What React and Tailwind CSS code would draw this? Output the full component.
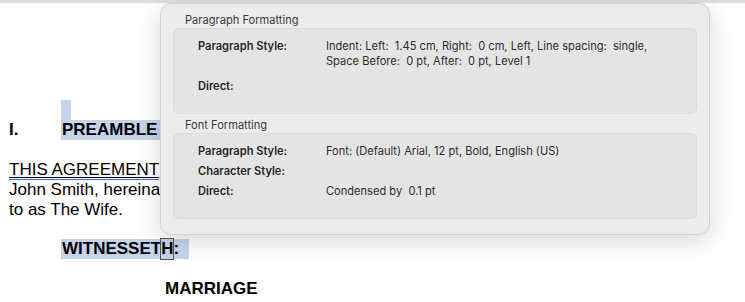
const docFont = { fontFamily: '"Liberation Sans", Arial, sans-serif' }

function InfoRow({ label, children }) {
  return (
    <div className="flex">
      <div className="w-[128px] shrink-0 font-semibold text-[#262626]">{label}</div>
      <div className="text-[#2e2e2e]">{children}</div>
    </div>
  )
}

function FormattingPopup() {
  return (
    <div
      className="absolute left-[160px] top-[3px] h-[232px] w-[550px] rounded-[11px] border border-[#d2d2d2] bg-[#ececec] px-[12px] pt-[9px] text-[11.1px] leading-[15px] shadow-[0_6px_24px_rgba(0,0,0,0.16)]"
      style={{ fontFamily: 'Inter, "Noto Sans", sans-serif' }}
    >
      <div className="pl-[12px] text-[#3a3a3a]">Paragraph Formatting</div>
      <div className="h-[86px] rounded-[6px] border border-[#dcdcdc] bg-[#e4e4e4] px-[24px] pt-[10px]">
        <InfoRow label="Paragraph Style:">
          Indent: Left:&nbsp; 1.45 cm, Right:&nbsp; 0 cm, Left, Line spacing:&nbsp; single,
          <br />
          Space Before:&nbsp; 0 pt, After:&nbsp; 0 pt, Level 1
        </InfoRow>
        <div className="mt-[10px]">
          <InfoRow label="Direct:" />
        </div>
      </div>
      <div className="mt-[4px] pl-[12px] text-[#3a3a3a]">Font Formatting</div>
      <div className="h-[86px] rounded-[6px] border border-[#dcdcdc] bg-[#e4e4e4] px-[24px] pt-[10px]">
        <div className="flex flex-col gap-[5px]">
          <InfoRow label="Paragraph Style:">Font: (Default) Arial, 12 pt, Bold, English (US)</InfoRow>
          <InfoRow label="Character Style:" />
          <InfoRow label="Direct:">Condensed by&nbsp; 0.1 pt</InfoRow>
        </div>
      </div>
    </div>
  )
}

export default function App() {
  return (
    <div className="relative h-[302px] w-[745px] overflow-hidden bg-white">
      <div className="h-[3px] bg-[#dedede]" />
      <div className="pt-[97px] text-[17px] leading-[20px] text-black" style={docFont}>
        <div className="ml-[61px] h-[20px] w-[10px] bg-[#c6d4ea]" />
        <div className="flex h-[20px] font-bold">
          <span className="w-[61px] pl-[9px]">I.</span>
          <span className="bg-[#c6d4ea] pl-px pr-[10px]">PREAMBLE</span>
        </div>
        <div className="h-[20px]" />
        <div className="pl-[9px]">
          <span className="underline decoration-1 underline-offset-[2px]">THIS AGREEMENT</span>
          <span className="block h-0">
            <span className="relative -top-[1px] block h-px w-[150px] bg-[#3b6fd6]" />
          </span>
          <div>John Smith, hereinafter</div>
          <div>to as The Wife.</div>
        </div>
        <div className="h-[19px]" />
        <div className="ml-[61px] flex h-[20px] w-[128px] items-center bg-[#c6d4ea] font-bold">
          <span className="pl-px">WITNESSET</span>
          <span className="outline outline-1 outline-[#555]">H</span>
          <span>:</span>
        </div>
        <div className="h-[20px]" />
        <div className="pl-[165px] font-bold">MARRIAGE</div>
      </div>
      <FormattingPopup />
    </div>
  )
}
